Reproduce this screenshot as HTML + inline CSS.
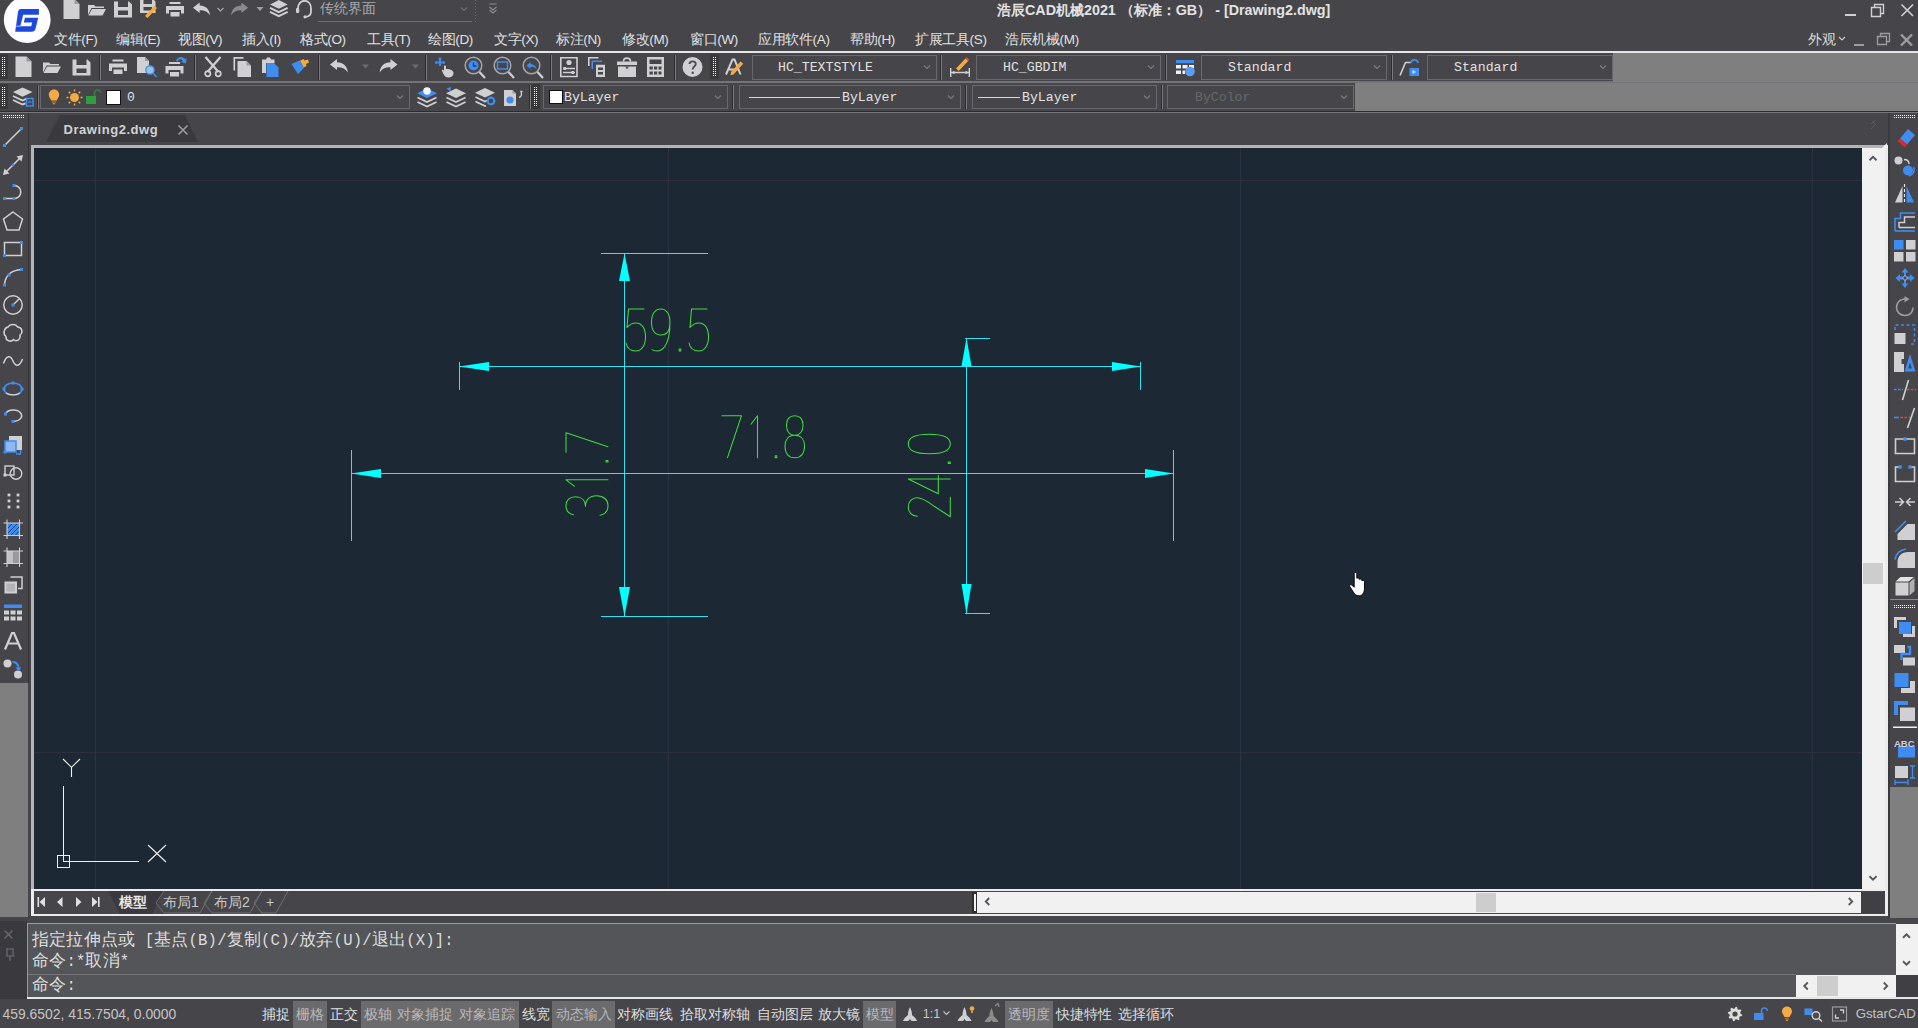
<!DOCTYPE html>
<html lang="zh"><head><meta charset="utf-8"><title>GstarCAD</title>
<style>
html,body{margin:0;padding:0}
body{width:1918px;height:1028px;position:relative;overflow:hidden;background:#46464a;font-family:"Liberation Sans",sans-serif}
body>div,body>svg{position:absolute;display:block}
.t{white-space:nowrap;overflow:visible}
.m{font-family:"Liberation Mono",monospace}
</style></head><body>
<div style="left:0px;top:51px;width:1918px;height:2px;background:#e6e6e6;"></div>
<div style="left:0px;top:81px;width:1918px;height:2px;background:#747478;"></div>
<div style="left:1613px;top:53px;width:305px;height:29px;background:#7f7f80;"></div>
<div style="left:1355px;top:83px;width:563px;height:28px;background:#7f7f80;"></div>
<div style="left:0px;top:111px;width:1918px;height:1px;background:#2c2c30;"></div>
<div style="left:0px;top:112px;width:1918px;height:1px;background:#77777a;"></div>
<div style="left:0px;top:683px;width:28px;height:234px;background:#7f7f80;"></div>
<div style="left:1890px;top:787px;width:28px;height:131px;background:#7f7f80;"></div>
<div style="left:1888px;top:113px;width:2px;height:805px;background:#3a3a3e;"></div>
<div style="left:31px;top:145px;width:1857px;height:771px;background:#ececec;"></div>
<div style="left:31px;top:145px;width:1854px;height:3px;background:#b4b4b6;"></div>
<div style="left:31px;top:145px;width:3px;height:744px;background:#b4b4b6;"></div>
<div style="left:28px;top:113px;width:1px;height:570px;background:#333336;"></div>
<div style="left:34px;top:148px;width:1828px;height:741px;background:#1c2834;"></div>
<div style="left:1862px;top:148px;width:23px;height:741px;background:#f1f1f1;"></div>
<div style="left:34px;top:891px;width:1851px;height:23px;background:#46464a;"></div>
<div style="left:977px;top:892px;width:884px;height:21px;background:#f1f1f1;"></div>
<div style="left:972px;top:892px;width:5px;height:21px;background:#2e2e30;"></div>
<div style="left:974px;top:894px;width:2px;height:17px;background:#f4f4f4;"></div>
<div style="left:1861px;top:892px;width:24px;height:21px;background:#404044;"></div>
<div style="left:1863px;top:563px;width:20px;height:21px;background:#cdcdcd;"></div>
<div style="left:1476px;top:893px;width:20px;height:19px;background:#cdcdcd;"></div>
<div style="left:0px;top:921px;width:27px;height:78px;background:#3a3a3e;"></div>
<div style="left:27px;top:923px;width:1869px;height:75px;background:#545558;box-sizing:border-box;border-top:1px solid #9a9a9e;border-left:1px solid #9a9a9e"></div>
<div style="left:27px;top:997px;width:1891px;height:2px;background:#e6e6e6;"></div>
<div style="left:28px;top:974px;width:1768px;height:1px;background:#77777b;"></div>
<div style="left:1896px;top:924px;width:22px;height:51px;background:#f1f1f1;"></div>
<div style="left:1796px;top:975px;width:100px;height:22px;background:#f1f1f1;"></div>
<div style="left:1896px;top:975px;width:22px;height:22px;background:#404044;"></div>
<div style="left:1817px;top:976px;width:21px;height:20px;background:#cdcdcd;"></div>
<div style="left:293px;top:1001px;width:34px;height:27px;background:#6b6b6e;"></div>
<div style="left:361px;top:1001px;width:158px;height:27px;background:#6b6b6e;"></div>
<div style="left:552px;top:1001px;width:63px;height:27px;background:#6b6b6e;"></div>
<div style="left:863px;top:1001px;width:33px;height:27px;background:#6b6b6e;"></div>
<div style="left:1005px;top:1001px;width:48px;height:27px;background:#6b6b6e;"></div>
<svg style="left:40px;top:113px;" width="170" height="32" viewBox="0 0 170 32"><path d="M6 29 L20 2 L145 2 L158 29 Z" fill="#3a3a3e"/></svg>
<div class="t" style="left:63.5px;top:121px;font-size:13px;line-height:17px;height:17px;color:#d2d2d2;font-weight:bold;letter-spacing:0.55px">Drawing2.dwg</div>
<svg style="left:177px;top:124px;" width="12" height="12" viewBox="0 0 12 12"><path d="M1.5 1.5 L10.5 10.5 M10.5 1.5 L1.5 10.5" stroke="#9a9aa0" stroke-width="1.6" fill="none"/></svg>
<svg style="left:100px;top:891px;" width="190" height="23" viewBox="0 0 190 23"><path d="M8 0 L20 23 L52 23 L64 0 Z" fill="#3a3a3e"/><path d="M64 0 L56 12 L64 22 L100 22 L112 0 M112 0 L104 12 L112 22 L150 22 L162 0 M162 0 L154 12 L162 22 L176 22 L188 0" stroke="#6e6e72" stroke-width="1" fill="none"/></svg>
<div class="t" style="left:119px;top:892px;font-size:14px;line-height:20px;height:20px;color:#e8e8e8;font-weight:bold">模型</div>
<div class="t" style="left:163px;top:892px;font-size:14px;line-height:20px;height:20px;color:#c8c8c8;">布局1</div>
<div class="t" style="left:214px;top:892px;font-size:14px;line-height:20px;height:20px;color:#c8c8c8;">布局2</div>
<div class="t" style="left:266px;top:892px;font-size:14px;line-height:20px;height:20px;color:#c8c8c8;">+</div>
<svg style="left:36px;top:894px;" width="68" height="16" viewBox="0 0 68 16"><g fill="#e0e0e0"><rect x="1.5" y="3" width="1.6" height="10"/><path d="M9 3 L3.5 8 L9 13Z"/><path d="M26.5 3 L21 8 L26.5 13Z"/><path d="M40 3 L45.5 8 L40 13Z"/><path d="M56 3 L61.5 8 L56 13Z"/><rect x="62" y="3" width="1.6" height="10"/></g></svg>
<div class="t" style="left:32px;top:929px;font-size:17px;line-height:22px;height:22px;color:#dedede;letter-spacing:0.18px">指定拉伸点或<span style="font-family:'Liberation Mono',monospace;font-size:15.6px">&nbsp;[</span>基点<span style="font-family:'Liberation Mono',monospace;font-size:15.6px">(B)/</span>复制<span style="font-family:'Liberation Mono',monospace;font-size:15.6px">(C)/</span>放弃<span style="font-family:'Liberation Mono',monospace;font-size:15.6px">(U)/</span>退出<span style="font-family:'Liberation Mono',monospace;font-size:15.6px">(X)]:</span></div>
<div class="t" style="left:32px;top:950px;font-size:17px;line-height:22px;height:22px;color:#dedede;letter-spacing:0.18px">命令<span style="font-family:'Liberation Mono',monospace;font-size:15.6px">:*</span>取消<span style="font-family:'Liberation Mono',monospace;font-size:15.6px">*</span></div>
<div class="t" style="left:32px;top:974px;font-size:17px;line-height:22px;height:22px;color:#dedede;letter-spacing:0.18px">命令<span style="font-family:'Liberation Mono',monospace;font-size:15.6px">:</span></div>
<div class="t" style="left:2.5px;top:1005px;font-size:13.9px;line-height:18px;height:18px;color:#c4c4c4;">459.6502, 415.7504, 0.0000</div>
<div class="t" style="left:262px;top:1005px;font-size:14px;line-height:18px;height:18px;color:#dedede;">捕捉</div>
<div class="t" style="left:296px;top:1005px;font-size:14px;line-height:18px;height:18px;color:#b8b8ba;">栅格</div>
<div class="t" style="left:330px;top:1005px;font-size:14px;line-height:18px;height:18px;color:#dedede;">正交</div>
<div class="t" style="left:364px;top:1005px;font-size:14px;line-height:18px;height:18px;color:#b8b8ba;">极轴</div>
<div class="t" style="left:397px;top:1005px;font-size:14px;line-height:18px;height:18px;color:#b8b8ba;">对象捕捉</div>
<div class="t" style="left:459px;top:1005px;font-size:14px;line-height:18px;height:18px;color:#b8b8ba;">对象追踪</div>
<div class="t" style="left:522px;top:1005px;font-size:14px;line-height:18px;height:18px;color:#dedede;">线宽</div>
<div class="t" style="left:556px;top:1005px;font-size:14px;line-height:18px;height:18px;color:#b8b8ba;">动态输入</div>
<div class="t" style="left:617px;top:1005px;font-size:14px;line-height:18px;height:18px;color:#dedede;">对称画线</div>
<div class="t" style="left:680px;top:1005px;font-size:14px;line-height:18px;height:18px;color:#dedede;">拾取对称轴</div>
<div class="t" style="left:757px;top:1005px;font-size:14px;line-height:18px;height:18px;color:#dedede;">自动图层</div>
<div class="t" style="left:818px;top:1005px;font-size:14px;line-height:18px;height:18px;color:#dedede;">放大镜</div>
<div class="t" style="left:866px;top:1005px;font-size:14px;line-height:18px;height:18px;color:#b8b8ba;">模型</div>
<div class="t" style="left:1008px;top:1005px;font-size:14px;line-height:18px;height:18px;color:#b8b8ba;">透明度</div>
<div class="t" style="left:1056px;top:1005px;font-size:14px;line-height:18px;height:18px;color:#dedede;">快捷特性</div>
<div class="t" style="left:1118px;top:1005px;font-size:14px;line-height:18px;height:18px;color:#dedede;">选择循环</div>
<div class="t" style="left:922.8px;top:1005px;font-size:12.5px;line-height:18px;height:18px;color:#c8c8c8;">1:1</div>
<div class="t" style="left:1855.7px;top:1005px;font-size:13.2px;line-height:18px;height:18px;color:#c4c4c4;">GstarCAD</div>
<div class="t" style="left:997px;top:1px;font-size:14.3px;line-height:18px;height:18px;color:#e2e2e2;font-weight:bold">浩辰CAD机械2021 （标准：GB） - [Drawing2.dwg]</div>
<div class="t" style="left:320px;top:0px;font-size:13.5px;line-height:18px;height:18px;color:#a8a8ac;">传统界面</div>
<div style="left:318px;top:21px;width:154px;height:1px;background:#707078;"></div>
<div class="t" style="left:1808px;top:31px;font-size:13.5px;line-height:18px;height:18px;color:#dcdcdc;">外观</div>
<div class="t" style="left:54px;top:31px;font-size:13.5px;line-height:18px;height:18px;color:#e0e0e0;letter-spacing:-0.35px">文件(F)</div>
<div class="t" style="left:116px;top:31px;font-size:13.5px;line-height:18px;height:18px;color:#e0e0e0;letter-spacing:-0.35px">编辑(E)</div>
<div class="t" style="left:178px;top:31px;font-size:13.5px;line-height:18px;height:18px;color:#e0e0e0;letter-spacing:-0.35px">视图(V)</div>
<div class="t" style="left:242px;top:31px;font-size:13.5px;line-height:18px;height:18px;color:#e0e0e0;letter-spacing:-0.35px">插入(I)</div>
<div class="t" style="left:300px;top:31px;font-size:13.5px;line-height:18px;height:18px;color:#e0e0e0;letter-spacing:-0.35px">格式(O)</div>
<div class="t" style="left:367px;top:31px;font-size:13.5px;line-height:18px;height:18px;color:#e0e0e0;letter-spacing:-0.35px">工具(T)</div>
<div class="t" style="left:428px;top:31px;font-size:13.5px;line-height:18px;height:18px;color:#e0e0e0;letter-spacing:-0.35px">绘图(D)</div>
<div class="t" style="left:494px;top:31px;font-size:13.5px;line-height:18px;height:18px;color:#e0e0e0;letter-spacing:-0.35px">文字(X)</div>
<div class="t" style="left:556px;top:31px;font-size:13.5px;line-height:18px;height:18px;color:#e0e0e0;letter-spacing:-0.35px">标注(N)</div>
<div class="t" style="left:622px;top:31px;font-size:13.5px;line-height:18px;height:18px;color:#e0e0e0;letter-spacing:-0.35px">修改(M)</div>
<div class="t" style="left:690px;top:31px;font-size:13.5px;line-height:18px;height:18px;color:#e0e0e0;letter-spacing:-0.35px">窗口(W)</div>
<div class="t" style="left:758px;top:31px;font-size:13.5px;line-height:18px;height:18px;color:#e0e0e0;letter-spacing:-0.35px">应用软件(A)</div>
<div class="t" style="left:850px;top:31px;font-size:13.5px;line-height:18px;height:18px;color:#e0e0e0;letter-spacing:-0.35px">帮助(H)</div>
<div class="t" style="left:915px;top:31px;font-size:13.5px;line-height:18px;height:18px;color:#e0e0e0;letter-spacing:-0.35px">扩展工具(S)</div>
<div class="t" style="left:1005px;top:31px;font-size:13.5px;line-height:18px;height:18px;color:#e0e0e0;letter-spacing:-0.35px">浩辰机械(M)</div>
<div style="left:752px;top:55px;width:185px;height:25px;box-sizing:border-box;border:1px solid #68686e"></div>
<svg style="left:923px;top:64px;" width="8" height="6" viewBox="0 0 8 6"><path d="M1 1.5 L4 4.5 L7 1.5" stroke="#7a7a80" stroke-width="1.1" fill="none"/></svg>
<div style="left:976px;top:55px;width:185px;height:25px;box-sizing:border-box;border:1px solid #68686e"></div>
<svg style="left:1147px;top:64px;" width="8" height="6" viewBox="0 0 8 6"><path d="M1 1.5 L4 4.5 L7 1.5" stroke="#7a7a80" stroke-width="1.1" fill="none"/></svg>
<div style="left:1201px;top:55px;width:186px;height:25px;box-sizing:border-box;border:1px solid #68686e"></div>
<svg style="left:1373px;top:64px;" width="8" height="6" viewBox="0 0 8 6"><path d="M1 1.5 L4 4.5 L7 1.5" stroke="#7a7a80" stroke-width="1.1" fill="none"/></svg>
<div style="left:1427px;top:55px;width:186px;height:25px;box-sizing:border-box;border:1px solid #68686e"></div>
<svg style="left:1599px;top:64px;" width="8" height="6" viewBox="0 0 8 6"><path d="M1 1.5 L4 4.5 L7 1.5" stroke="#7a7a80" stroke-width="1.1" fill="none"/></svg>
<div style="left:40px;top:85px;width:370px;height:24px;box-sizing:border-box;border:1px solid #68686e"></div>
<svg style="left:396px;top:94px;" width="8" height="6" viewBox="0 0 8 6"><path d="M1 1.5 L4 4.5 L7 1.5" stroke="#7a7a80" stroke-width="1.1" fill="none"/></svg>
<div style="left:543px;top:85px;width:185px;height:24px;box-sizing:border-box;border:1px solid #68686e"></div>
<svg style="left:714px;top:94px;" width="8" height="6" viewBox="0 0 8 6"><path d="M1 1.5 L4 4.5 L7 1.5" stroke="#7a7a80" stroke-width="1.1" fill="none"/></svg>
<div style="left:739px;top:85px;width:222px;height:24px;box-sizing:border-box;border:1px solid #68686e"></div>
<svg style="left:947px;top:94px;" width="8" height="6" viewBox="0 0 8 6"><path d="M1 1.5 L4 4.5 L7 1.5" stroke="#7a7a80" stroke-width="1.1" fill="none"/></svg>
<div style="left:972px;top:85px;width:185px;height:24px;box-sizing:border-box;border:1px solid #68686e"></div>
<svg style="left:1143px;top:94px;" width="8" height="6" viewBox="0 0 8 6"><path d="M1 1.5 L4 4.5 L7 1.5" stroke="#7a7a80" stroke-width="1.1" fill="none"/></svg>
<div style="left:1167px;top:85px;width:187px;height:24px;box-sizing:border-box;border:1px solid #68686e"></div>
<svg style="left:1340px;top:94px;" width="8" height="6" viewBox="0 0 8 6"><path d="M1 1.5 L4 4.5 L7 1.5" stroke="#7a7a80" stroke-width="1.1" fill="none"/></svg>
<div class="t" style="left:778px;top:59px;font-size:13.2px;line-height:17px;height:17px;color:#e2e2e2;font-family:'Liberation Mono',monospace">HC_TEXTSTYLE</div>
<div class="t" style="left:1003px;top:59px;font-size:13.2px;line-height:17px;height:17px;color:#e2e2e2;font-family:'Liberation Mono',monospace">HC_GBDIM</div>
<div class="t" style="left:1228px;top:59px;font-size:13.2px;line-height:17px;height:17px;color:#e2e2e2;font-family:'Liberation Mono',monospace">Standard</div>
<div class="t" style="left:1454px;top:59px;font-size:13.2px;line-height:17px;height:17px;color:#e2e2e2;font-family:'Liberation Mono',monospace">Standard</div>
<div class="t" style="left:564px;top:89px;font-size:13.2px;line-height:17px;height:17px;color:#e2e2e2;font-family:'Liberation Mono',monospace">ByLayer</div>
<div class="t" style="left:842px;top:89px;font-size:13.2px;line-height:17px;height:17px;color:#e2e2e2;font-family:'Liberation Mono',monospace">ByLayer</div>
<div class="t" style="left:1022px;top:89px;font-size:13.2px;line-height:17px;height:17px;color:#e2e2e2;font-family:'Liberation Mono',monospace">ByLayer</div>
<div class="t" style="left:1195px;top:89px;font-size:13.2px;line-height:17px;height:17px;color:#66666c;font-family:'Liberation Mono',monospace">ByColor</div>
<div class="t" style="left:127px;top:89px;font-size:13px;line-height:17px;height:17px;color:#e2e2e2;font-family:'Liberation Mono',monospace">0</div>
<div style="left:749px;top:97px;width:91px;height:1px;background:#d8d8d8;"></div>
<div style="left:978px;top:97px;width:42px;height:1px;background:#d8d8d8;"></div>
<div style="left:106px;top:90px;width:15px;height:15px;background:#ffffff;box-sizing:border-box;border:1px solid #111"></div>
<div style="left:549px;top:90px;width:14px;height:14px;background:#ffffff;box-sizing:border-box;border:1px solid #111"></div>
<svg style="left:0px;top:0px;pointer-events:none" width="1918" height="1028" viewBox="0 0 1918 1028"><circle cx="27.2" cy="19.7" r="23.4" fill="#fdfdff"/><path d="M20.8 9 H38.9 V14.8 H23.2 L20.3 26.2 H31.2 L32.2 22.4 H23.8 L25 17.700 H38.2 L35.6 28.600 Q34.8 31.8 31.6 31.8 H15.2 L18 12 Q18.5 9 20.8 9 Z" fill="#1d48dc"/><path d="M15.800 26.2 H20.5" stroke="#b8c8f8" stroke-width="0.9"/><g transform="translate(63.5 -1)"><path d="M0 0 H11 L16 5 V20 H0 Z" fill="#d0d0d2"/><path d="M11 0 V5 H16 Z" fill="#9c9ca0"/></g><g transform="translate(88 3)"><path d="M0 2 H6 L7.5 3.5 H16 V5 H3.5 L0 12 Z" fill="#d0d0d2"/><path d="M4 6 H18 L14.5 12.5 H0.5 Z" fill="#d0d0d2"/></g><g transform="translate(114 1.5)"><path d="M0 0 H4 V5.5 H14 V0 H15 L18 3 V16 H0 Z M4 9 V13.5 H14 V9 Z" fill="#d0d0d2" fill-rule="evenodd"/></g><g transform="translate(140 -1)"><path d="M0 0 H3.5 V5 H12 V0 H13 L15.5 2.5 V14 H0 Z M3.5 8 V11.5 H12 V8 Z" fill="#d0d0d2" fill-rule="evenodd"/><path d="M5 17 L14.5 6.5 L17 9 L7.5 19 Z" fill="#f4aa45"/></g><g transform="translate(166 2)"><path d="M3.5 0 H14.5 V2 H3.5 Z" fill="#d0d0d2"/><path d="M0 4 H18 V11.5 H15 V8 H3 V11.5 H0 Z" fill="#d0d0d2"/><path d="M4.5 10 H13.5 V14.5 H4.5 Z" fill="#d0d0d2"/></g><g transform="translate(193 2.5) scale(0.95)"><path d="M0 5.5 L7 0 V3.2 C13 3.2 17.5 7 17.8 13.5 C15.5 9.5 12 8 7 8.2 V11 Z" fill="#d0d0d2"/></g><g transform="translate(217.5 8)"><path d="M0 0 L3 3 L6 0" stroke="#a8a8ae" stroke-width="1.2" fill="none"/></g><g transform="translate(231 2.5) scale(0.95)"><g transform="translate(18 0) scale(-1 1)"><path d="M0 5.5 L7 0 V3.2 C13 3.2 17.5 7 17.8 13.5 C15.5 9.5 12 8 7 8.2 V11 Z" fill="#8a8a90"/></g></g><g transform="translate(256.5 7)"><path d="M0 0 H7 L3.5 4 Z" fill="#a0a0a6"/></g><g transform="translate(270 0) scale(0.98)"><path d="M9 0 L18 4.5 L9 9 L0 4.5 Z" fill="#d0d0d2"/><path d="M0 8 L9 12.5 L18 8 M0 12 L9 16.5 L18 12" stroke="#d0d0d2" stroke-width="2" fill="none"/></g><path d="M298 11 V8.5 C298 3.5 301 0.8 304.5 0.8 C308 0.8 311 3.5 311 8.5 V11.5 C311 14.5 309 16.5 306 16.8" stroke="#d0d0d2" stroke-width="1.8" fill="none"/><rect x="296" y="8" width="3.2" height="5" rx="1" fill="#d0d0d2"/><circle cx="305" cy="16.8" r="1.6" fill="#d0d0d2"/><g transform="translate(461 7.5)"><path d="M0 0 L3 3 L6 0" stroke="#6e6e76" stroke-width="1.2" fill="none"/></g><path d="M475.5 0 V22" stroke="#6e6e76" stroke-width="1" stroke-dasharray="1 2"/><g transform="translate(489.5 4)"><path d="M0 0 H7 M0 3 L3.5 6 L7 3 M0 6 L3.5 9 L7 6" stroke="#8e8e96" stroke-width="1.1" fill="none"/></g><rect x="1845" y="14" width="11" height="2" fill="#d0d0d2"/><path d="M1871.5 7.5 H1880.5 V16.5 H1871.5 Z M1874.5 7.5 V4.5 H1883.5 V13.5 H1880.5" stroke="#d0d0d2" stroke-width="1.4" fill="none"/><path d="M1901.5 4.5 L1913 16 M1913 4.5 L1901.5 16" stroke="#d0d0d2" stroke-width="1.6" fill="none"/><g transform="translate(1839 37)"><path d="M0 0 L3 3 L6 0" stroke="#c8c8c8" stroke-width="1.2" fill="none"/></g><rect x="1854" y="44" width="10" height="2" fill="#9c9ca2"/><path d="M1877.500 36.5 H1886.5 V44.5 H1877.5 Z M1880.5 36.500 V33.5 H1889.5 V41.5 H1886.500" stroke="#9c9ca2" stroke-width="1.3" fill="none"/><path d="M1901 34.5 L1912 45.5 M1912 34.5 L1901 45.5" stroke="#9c9ca2" stroke-width="2.4" fill="none"/><rect x="-1" y="54" width="9" height="25" fill="#38383a"/><rect x="2" y="57" width="1" height="1" fill="#fff"/><rect x="4" y="57" width="1" height="1" fill="#fff"/><rect x="2" y="59" width="1" height="1" fill="#fff"/><rect x="4" y="59" width="1" height="1" fill="#fff"/><rect x="2" y="61" width="1" height="1" fill="#fff"/><rect x="4" y="61" width="1" height="1" fill="#fff"/><rect x="2" y="63" width="1" height="1" fill="#fff"/><rect x="4" y="63" width="1" height="1" fill="#fff"/><rect x="2" y="65" width="1" height="1" fill="#fff"/><rect x="4" y="65" width="1" height="1" fill="#fff"/><rect x="2" y="67" width="1" height="1" fill="#fff"/><rect x="4" y="67" width="1" height="1" fill="#fff"/><rect x="2" y="69" width="1" height="1" fill="#fff"/><rect x="4" y="69" width="1" height="1" fill="#fff"/><rect x="2" y="71" width="1" height="1" fill="#fff"/><rect x="4" y="71" width="1" height="1" fill="#fff"/><rect x="2" y="73" width="1" height="1" fill="#fff"/><rect x="4" y="73" width="1" height="1" fill="#fff"/><rect x="2" y="75" width="1" height="1" fill="#fff"/><rect x="4" y="75" width="1" height="1" fill="#fff"/><rect x="710" y="54" width="9" height="25" fill="#38383a"/><rect x="713" y="57" width="1" height="1" fill="#fff"/><rect x="715" y="57" width="1" height="1" fill="#fff"/><rect x="713" y="59" width="1" height="1" fill="#fff"/><rect x="715" y="59" width="1" height="1" fill="#fff"/><rect x="713" y="61" width="1" height="1" fill="#fff"/><rect x="715" y="61" width="1" height="1" fill="#fff"/><rect x="713" y="63" width="1" height="1" fill="#fff"/><rect x="715" y="63" width="1" height="1" fill="#fff"/><rect x="713" y="65" width="1" height="1" fill="#fff"/><rect x="715" y="65" width="1" height="1" fill="#fff"/><rect x="713" y="67" width="1" height="1" fill="#fff"/><rect x="715" y="67" width="1" height="1" fill="#fff"/><rect x="713" y="69" width="1" height="1" fill="#fff"/><rect x="715" y="69" width="1" height="1" fill="#fff"/><rect x="713" y="71" width="1" height="1" fill="#fff"/><rect x="715" y="71" width="1" height="1" fill="#fff"/><rect x="713" y="73" width="1" height="1" fill="#fff"/><rect x="715" y="73" width="1" height="1" fill="#fff"/><rect x="713" y="75" width="1" height="1" fill="#fff"/><rect x="715" y="75" width="1" height="1" fill="#fff"/><rect x="-1" y="84" width="9" height="25" fill="#38383a"/><rect x="2" y="87" width="1" height="1" fill="#fff"/><rect x="4" y="87" width="1" height="1" fill="#fff"/><rect x="2" y="89" width="1" height="1" fill="#fff"/><rect x="4" y="89" width="1" height="1" fill="#fff"/><rect x="2" y="91" width="1" height="1" fill="#fff"/><rect x="4" y="91" width="1" height="1" fill="#fff"/><rect x="2" y="93" width="1" height="1" fill="#fff"/><rect x="4" y="93" width="1" height="1" fill="#fff"/><rect x="2" y="95" width="1" height="1" fill="#fff"/><rect x="4" y="95" width="1" height="1" fill="#fff"/><rect x="2" y="97" width="1" height="1" fill="#fff"/><rect x="4" y="97" width="1" height="1" fill="#fff"/><rect x="2" y="99" width="1" height="1" fill="#fff"/><rect x="4" y="99" width="1" height="1" fill="#fff"/><rect x="2" y="101" width="1" height="1" fill="#fff"/><rect x="4" y="101" width="1" height="1" fill="#fff"/><rect x="2" y="103" width="1" height="1" fill="#fff"/><rect x="4" y="103" width="1" height="1" fill="#fff"/><rect x="2" y="105" width="1" height="1" fill="#fff"/><rect x="4" y="105" width="1" height="1" fill="#fff"/><rect x="531" y="84" width="9" height="25" fill="#38383a"/><rect x="534" y="87" width="1" height="1" fill="#fff"/><rect x="536" y="87" width="1" height="1" fill="#fff"/><rect x="534" y="89" width="1" height="1" fill="#fff"/><rect x="536" y="89" width="1" height="1" fill="#fff"/><rect x="534" y="91" width="1" height="1" fill="#fff"/><rect x="536" y="91" width="1" height="1" fill="#fff"/><rect x="534" y="93" width="1" height="1" fill="#fff"/><rect x="536" y="93" width="1" height="1" fill="#fff"/><rect x="534" y="95" width="1" height="1" fill="#fff"/><rect x="536" y="95" width="1" height="1" fill="#fff"/><rect x="534" y="97" width="1" height="1" fill="#fff"/><rect x="536" y="97" width="1" height="1" fill="#fff"/><rect x="534" y="99" width="1" height="1" fill="#fff"/><rect x="536" y="99" width="1" height="1" fill="#fff"/><rect x="534" y="101" width="1" height="1" fill="#fff"/><rect x="536" y="101" width="1" height="1" fill="#fff"/><rect x="534" y="103" width="1" height="1" fill="#fff"/><rect x="536" y="103" width="1" height="1" fill="#fff"/><rect x="534" y="105" width="1" height="1" fill="#fff"/><rect x="536" y="105" width="1" height="1" fill="#fff"/><rect x="3" y="115" width="1" height="1" fill="#fff"/><rect x="3" y="117" width="1" height="1" fill="#fff"/><rect x="5" y="115" width="1" height="1" fill="#fff"/><rect x="5" y="117" width="1" height="1" fill="#fff"/><rect x="7" y="115" width="1" height="1" fill="#fff"/><rect x="7" y="117" width="1" height="1" fill="#fff"/><rect x="9" y="115" width="1" height="1" fill="#fff"/><rect x="9" y="117" width="1" height="1" fill="#fff"/><rect x="11" y="115" width="1" height="1" fill="#fff"/><rect x="11" y="117" width="1" height="1" fill="#fff"/><rect x="13" y="115" width="1" height="1" fill="#fff"/><rect x="13" y="117" width="1" height="1" fill="#fff"/><rect x="15" y="115" width="1" height="1" fill="#fff"/><rect x="15" y="117" width="1" height="1" fill="#fff"/><rect x="17" y="115" width="1" height="1" fill="#fff"/><rect x="17" y="117" width="1" height="1" fill="#fff"/><rect x="19" y="115" width="1" height="1" fill="#fff"/><rect x="19" y="117" width="1" height="1" fill="#fff"/><rect x="21" y="115" width="1" height="1" fill="#fff"/><rect x="21" y="117" width="1" height="1" fill="#fff"/><rect x="23" y="115" width="1" height="1" fill="#fff"/><rect x="23" y="117" width="1" height="1" fill="#fff"/><rect x="1894" y="115" width="1" height="1" fill="#fff"/><rect x="1894" y="117" width="1" height="1" fill="#fff"/><rect x="1896" y="115" width="1" height="1" fill="#fff"/><rect x="1896" y="117" width="1" height="1" fill="#fff"/><rect x="1898" y="115" width="1" height="1" fill="#fff"/><rect x="1898" y="117" width="1" height="1" fill="#fff"/><rect x="1900" y="115" width="1" height="1" fill="#fff"/><rect x="1900" y="117" width="1" height="1" fill="#fff"/><rect x="1902" y="115" width="1" height="1" fill="#fff"/><rect x="1902" y="117" width="1" height="1" fill="#fff"/><rect x="1904" y="115" width="1" height="1" fill="#fff"/><rect x="1904" y="117" width="1" height="1" fill="#fff"/><rect x="1906" y="115" width="1" height="1" fill="#fff"/><rect x="1906" y="117" width="1" height="1" fill="#fff"/><rect x="1908" y="115" width="1" height="1" fill="#fff"/><rect x="1908" y="117" width="1" height="1" fill="#fff"/><rect x="1910" y="115" width="1" height="1" fill="#fff"/><rect x="1910" y="117" width="1" height="1" fill="#fff"/><rect x="1912" y="115" width="1" height="1" fill="#fff"/><rect x="1912" y="117" width="1" height="1" fill="#fff"/><rect x="1914" y="115" width="1" height="1" fill="#fff"/><rect x="1914" y="117" width="1" height="1" fill="#fff"/><rect x="1894" y="605" width="1" height="1" fill="#fff"/><rect x="1894" y="607" width="1" height="1" fill="#fff"/><rect x="1896" y="605" width="1" height="1" fill="#fff"/><rect x="1896" y="607" width="1" height="1" fill="#fff"/><rect x="1898" y="605" width="1" height="1" fill="#fff"/><rect x="1898" y="607" width="1" height="1" fill="#fff"/><rect x="1900" y="605" width="1" height="1" fill="#fff"/><rect x="1900" y="607" width="1" height="1" fill="#fff"/><rect x="1902" y="605" width="1" height="1" fill="#fff"/><rect x="1902" y="607" width="1" height="1" fill="#fff"/><rect x="1904" y="605" width="1" height="1" fill="#fff"/><rect x="1904" y="607" width="1" height="1" fill="#fff"/><rect x="1906" y="605" width="1" height="1" fill="#fff"/><rect x="1906" y="607" width="1" height="1" fill="#fff"/><rect x="1908" y="605" width="1" height="1" fill="#fff"/><rect x="1908" y="607" width="1" height="1" fill="#fff"/><rect x="1910" y="605" width="1" height="1" fill="#fff"/><rect x="1910" y="607" width="1" height="1" fill="#fff"/><rect x="1912" y="605" width="1" height="1" fill="#fff"/><rect x="1912" y="607" width="1" height="1" fill="#fff"/><rect x="1914" y="605" width="1" height="1" fill="#fff"/><rect x="1914" y="607" width="1" height="1" fill="#fff"/><rect x="99" y="55" width="1" height="25" fill="#2e2e32"/><rect x="100" y="55" width="1" height="25" fill="#7a7a80"/><rect x="194" y="55" width="1" height="25" fill="#2e2e32"/><rect x="195" y="55" width="1" height="25" fill="#7a7a80"/><rect x="318" y="55" width="1" height="25" fill="#2e2e32"/><rect x="319" y="55" width="1" height="25" fill="#7a7a80"/><rect x="425" y="55" width="1" height="25" fill="#2e2e32"/><rect x="426" y="55" width="1" height="25" fill="#7a7a80"/><rect x="550" y="55" width="1" height="25" fill="#2e2e32"/><rect x="551" y="55" width="1" height="25" fill="#7a7a80"/><rect x="674" y="55" width="1" height="25" fill="#2e2e32"/><rect x="675" y="55" width="1" height="25" fill="#7a7a80"/><rect x="940" y="55" width="1" height="25" fill="#2e2e32"/><rect x="941" y="55" width="1" height="25" fill="#7a7a80"/><rect x="1165" y="55" width="1" height="25" fill="#2e2e32"/><rect x="1166" y="55" width="1" height="25" fill="#7a7a80"/><rect x="1391" y="55" width="1" height="25" fill="#2e2e32"/><rect x="1392" y="55" width="1" height="25" fill="#7a7a80"/><rect x="37" y="85" width="1" height="24" fill="#2e2e32"/><rect x="38" y="85" width="1" height="24" fill="#7a7a80"/><rect x="529" y="85" width="1" height="24" fill="#2e2e32"/><rect x="530" y="85" width="1" height="24" fill="#7a7a80"/><rect x="732" y="85" width="1" height="24" fill="#2e2e32"/><rect x="733" y="85" width="1" height="24" fill="#7a7a80"/><rect x="965" y="85" width="1" height="24" fill="#2e2e32"/><rect x="966" y="85" width="1" height="24" fill="#7a7a80"/><rect x="1161" y="85" width="1" height="24" fill="#2e2e32"/><rect x="1162" y="85" width="1" height="24" fill="#7a7a80"/><g transform="translate(15.5 56.5)"><path d="M0 0 H11 L16 5 V20.5 H0 Z" fill="#d0d0d2"/><path d="M11 0 V5 H16 Z" fill="#9c9ca0"/></g><g transform="translate(43 60.5)"><path d="M0 2 H6 L7.5 3.5 H16 V5 H3.5 L0 12 Z" fill="#d0d0d2"/><path d="M4 6 H18 L14.5 12.5 H0.5 Z" fill="#d0d0d2"/></g><g transform="translate(72.5 59.5)"><path d="M0 0 H4 V5.5 H14 V0 H15 L18 3 V16 H0 Z M4 9 V13.5 H14 V9 Z" fill="#d0d0d2" fill-rule="evenodd"/></g><g transform="translate(109 59.5)"><path d="M3.5 0 H14.5 V2 H3.5 Z" fill="#d0d0d2"/><path d="M0 4 H18 V11.5 H15 V8 H3 V11.5 H0 Z" fill="#d0d0d2"/><path d="M4.5 10 H13.5 V14.5 H4.5 Z" fill="#d0d0d2"/></g><g transform="translate(137 57)"><path d="M0 0 H8 L12 4 V16 H0 Z" fill="#d0d0d2"/><path d="M8 0 V4 H12 Z" fill="#9c9ca0"/><circle cx="13" cy="13" r="4.2" fill="#9dbfee" stroke="#3f8df0" stroke-width="1.3"/><path d="M16 16 L19.500 20" stroke="#3f8df0" stroke-width="1.6"/></g><g transform="translate(165.5 62)"><path d="M3.5 0 H14.5 V2 H3.5 Z" fill="#d0d0d2"/><path d="M0 4 H18 V11.5 H15 V8 H3 V11.5 H0 Z" fill="#d0d0d2"/><path d="M4.5 10 H13.5 V14.5 H4.5 Z" fill="#d0d0d2"/><path d="M10.5 -1 C12 -5.500 17 -6.500 19.500 -3 L21 -4 L20.5 1.5 L15.5 0 L17.2 -1.2 C15.5 -3.500 13 -3 12.2 -0.5 Z" fill="#3f8df0"/></g><g transform="translate(204 57)"><path d="M1.500 0 L14.500 15 M16.500 0 L3.500 15" stroke="#d0d0d2" stroke-width="2.2" fill="none"/><circle cx="3.8" cy="16.800" r="2.6" fill="none" stroke="#d0d0d2" stroke-width="1.7"/><circle cx="14.200" cy="16.8" r="2.6" fill="none" stroke="#d0d0d2" stroke-width="1.7"/></g><g transform="translate(233.5 57)"><path d="M0.8 13.5 V0.8 H10" stroke="#d0d0d2" stroke-width="1.7" fill="none"/><g transform="translate(4 4)"><path d="M0 0 H9.0 L13.5 4.5 V16 H0 Z" fill="#d0d0d2"/><path d="M9.0 0 V4.5 H13.5 Z" fill="#9c9ca0"/></g></g><g transform="translate(262 57)"><path d="M0 2.500 H4 L5 0.5 H8 L9 2.500 H12.500 V6 H0 Z M0 6 H4 V16 H0 Z" fill="#d0d0d2"/><path d="M4.500 6 H12 L16.5 10.5 V20 H4.500 Z" fill="#3f8df0"/></g><g transform="translate(291.5 59)"><path d="M0 5 L8 1.500 L12.500 9 L6.500 15 Z" fill="#3f8df0"/><path d="M8.500 1.800 L12 0 L13 1.5 L16.500 0.5 L17.500 3.500 L14.500 5 L15 7 L12.300 8.600 Z" fill="#f4aa45"/></g><g transform="translate(330 59)"><path d="M0 5.5 L7 0 V3.2 C13 3.2 17.5 7 17.8 13.5 C15.5 9.5 12 8 7 8.2 V11 Z" fill="#d0d0d2"/></g><g transform="translate(362 64.5)"><path d="M0 0 H7 L3.5 4 Z" fill="#6c6c72"/></g><g transform="translate(379.5 59)"><g transform="translate(18 0) scale(-1 1)"><path d="M0 5.5 L7 0 V3.2 C13 3.2 17.5 7 17.8 13.5 C15.5 9.5 12 8 7 8.2 V11 Z" fill="#d0d0d2"/></g></g><g transform="translate(412 64.5)"><path d="M0 0 H7 L3.5 4 Z" fill="#6c6c72"/></g><g transform="translate(435 57)"><path d="M5 0 L7 2 H6 V4.500 H8.500 V3.500 L10.500 5.500 L8.500 7.500 V6.500 H6 V9 H4 V6.500 H1.500 V7.500 L-0.500 5.500 L1.500 3.500 V4.500 H4 V2 H3 Z" fill="#3f8df0"/><path d="M9 9.500 C9 8 11 8 11 9.500 V12 C13 11.500 18.500 12.500 18.500 16 C18.500 19 16 20.500 13.500 20.500 C10.500 20.500 9.500 19 8.500 17 L7 14 C6.500 12.800 8 12.200 9 13.500 Z" fill="#d0d0d2"/></g><circle cx="473.5" cy="65.5" r="8.300" fill="none" stroke="#a4a4aa" stroke-width="1.5"/><path d="M479.5 72.0 L485.0 78.0" stroke="#d0d0d2" stroke-width="2.200"/><circle cx="473.500" cy="65.500" r="5" fill="#3f8df0"/><path d="M473.500 62.500 V66 H476.500" stroke="#1c3c80" stroke-width="1.3" fill="none"/><circle cx="502.5" cy="65.5" r="8.300" fill="none" stroke="#a4a4aa" stroke-width="1.5"/><path d="M508.5 72.0 L514.0 78.0" stroke="#d0d0d2" stroke-width="2.200"/><rect x="497.5" y="62" width="10" height="7" fill="none" stroke="#3f8df0" stroke-width="1.500"/><circle cx="531.5" cy="65.5" r="8.300" fill="none" stroke="#a4a4aa" stroke-width="1.5"/><path d="M537.5 72.0 L543.0 78.0" stroke="#d0d0d2" stroke-width="2.200"/><path d="M526.500 65.500 L530.500 62 V64.300 C533.500 64.300 536 65.800 536.300 69 C535 67.200 533.500 66.700 530.500 66.800 V69 Z" fill="#3f8df0"/><g transform="translate(560 57)"><path d="M0.800 0.800 H17 V19.500 H0.800 Z" fill="none" stroke="#d0d0d2" stroke-width="1.600"/><circle cx="9" cy="5.500" r="2.600" fill="#d0d0d2"/><path d="M3 11.500 H15 M3 15.500 H15" stroke="#d0d0d2" stroke-width="1.600"/><rect x="3.500" y="10" width="2.5" height="3" fill="#d0d0d2"/><rect x="11.500" y="14" width="2.500" height="3" fill="#d0d0d2"/></g><g transform="translate(588 57)"><path d="M0.800 9 V0.800 H10.500" stroke="#d0d0d2" stroke-width="1.600" fill="none"/><path d="M4.300 12 V4.300 H14" stroke="#3f8df0" stroke-width="1.600" fill="none"/><path d="M8 7.800 H17 V20 H8 Z M10 10.500 V13 H15 V10.500 Z M10 15 V17.500 H15 V15 Z" fill="#d0d0d2" fill-rule="evenodd"/></g><g transform="translate(617 58)"><path d="M6.500 3.500 C6.500 -1 13.500 -1 13.500 3.500" stroke="#d0d0d2" stroke-width="1.700" fill="none"/><path d="M0 3.500 H20 V7 H0 Z" fill="#d0d0d2"/><path d="M1 8.500 H19 V19 H1 Z" fill="#d0d0d2"/><path d="M8 8.500 H12 L10 11.500 Z" fill="#55555a"/></g><g transform="translate(647 57)"><path d="M0 0 H17 V20 H0 Z M2.500 2.500 V7 H14.500 V2.500 Z M2.500 9.500 V12.500 H5.800 V9.500 Z M7 9.500 V12.500 H10.200 V9.500 Z M11.500 9.500 V12.500 H14.500 V9.500 Z M2.500 14.500 V17.500 H5.800 V14.500 Z M7 14.500 V17.500 H10.200 V14.500 Z M11.500 14.500 V17.500 H14.500 V14.500 Z" fill="#d0d0d2" fill-rule="evenodd"/></g><circle cx="692.500" cy="67" r="10" fill="#d0d0d2"/><path d="M689.500 64 C689.500 60.500 695.800 60.500 695.800 64 C695.800 66.200 692.700 66.500 692.700 69.500" stroke="#4a4a50" stroke-width="1.800" fill="none"/><circle cx="692.700" cy="72.800" r="1.200" fill="#4a4a50"/><g transform="translate(725 58)"><path d="M1 16.500 L7.500 1.500 H9.500 L15.500 16.500 M4 11.500 H12.500" stroke="#d0d0d2" stroke-width="2" fill="none"/><path d="M6 14 L15.500 3.500 L18.200 5.800 L8.500 16.500 L5.500 17.200 Z" fill="#f4aa45"/></g><g transform="translate(950 57)"><path d="M0.700 11 V20 M19.300 11 V20 M1 15.500 H19" stroke="#d0d0d2" stroke-width="1.400" fill="none"/><path d="M1 15.500 L4.500 13.800 V17.200 Z M19 15.500 L15.500 13.800 V17.200 Z" fill="#d0d0d2"/><path d="M6 11.500 L15.500 1.500 L18.200 4 L8.700 14 Z" fill="#f4aa45"/><path d="M15.500 1.500 L16.800 0.200 L19.500 2.700 L18.200 4 Z" fill="#e05030"/></g><g transform="translate(1176 60)"><rect x="0" y="0" width="18" height="3.200" fill="#3f8df0"/><path d="M0 5 H5 V8.500 H0 Z M6.500 5 H11.500 V8.500 H6.500 Z M13 5 H18 V8.500 H13 Z M0 10.500 H5 V14 H0 Z M6.500 10.500 H9 V14 H6.500 Z" fill="#f0f0f0"/><circle cx="14" cy="11.500" r="4.800" fill="#5c9cf4"/></g><g transform="translate(1399 58)"><path d="M1 17.500 L6.500 4.500 H12" stroke="#d0d0d2" stroke-width="1.600" fill="none"/><path d="M12 5 C12 1 18.500 0.500 19 5" stroke="#3f8df0" stroke-width="1.700" fill="none"/><rect x="10.500" y="10" width="9.500" height="8" fill="#3f8df0"/><path d="M13.500 12 L17 14 L13.500 16 Z" fill="#cfe0fa"/></g><g transform="translate(13 87.5)"><path d="M9.500 0 L19.500 4.500 L9.500 9.200 L0 4.500 Z" fill="#d0d0d2"/><path d="M0 8.500 L9.500 13 L14 11 M0 12.500 L9.500 17 L12.500 15.800" stroke="#d0d0d2" stroke-width="1.900" fill="none"/><rect x="13.500" y="11" width="6.500" height="7.500" fill="none" stroke="#3f8df0" stroke-width="1.400"/><path d="M15 14.500 H18.500" stroke="#3f8df0" stroke-width="1.200"/></g><path d="M54 89.500 C50.800 89.500 48.800 92 48.800 94.800 C48.800 97.200 50.500 98.500 51.200 100.500 H56.800 C57.500 98.500 59.200 97.200 59.200 94.800 C59.200 92 57.200 89.500 54 89.500 Z" fill="#f4aa45"/><rect x="51.800" y="101.300" width="4.400" height="1.500" fill="#b07020"/><path d="M52.500 103.300 H55.500 L54 104.800 Z" fill="#f4aa45"/><circle cx="74.500" cy="97.500" r="4.500" fill="#f4aa45"/><path d="M74.500 89.500 V91.500 M74.500 103.500 V105.500 M66.500 97.500 H68.500 M80.500 97.500 H82.500 M68.800 91.800 L70.300 93.300 M78.700 101.700 L80.200 103.200 M80.200 91.800 L78.700 93.300 M68.800 103.200 L70.300 101.700" stroke="#f4aa45" stroke-width="1.400"/><rect x="86" y="96" width="10" height="8" fill="#2f9e3c"/><path d="M94.500 96 V93 C94.500 90 98 88.500 99.800 91 L101 92.800" stroke="#3c7c44" stroke-width="1.500" fill="none"/><g transform="translate(417 88.5)"><path d="M10 0 L20 4.800 L10 9.600 L0 4.800 Z" fill="#3f8df0"/><path d="M0.500 9 L10 13.500 L19.500 9 M0.500 13.500 L10 18 L19.500 13.500" stroke="#d0d0d2" stroke-width="1.900" fill="none"/></g><circle cx="427" cy="91" r="3.800" fill="#f2f4fa"/><g transform="translate(446 88.5)"><path d="M10 0 L20 4.800 L10 9.600 L0 4.800 Z" fill="#d0d0d2"/><path d="M0.500 9 L10 13.500 L19.500 9 M0.500 13.500 L10 18 L19.500 13.500" stroke="#d0d0d2" stroke-width="1.900" fill="none"/></g><path d="M446.500 88.500 L451 87 L450.500 91.500 Z" fill="#3f8df0"/><g transform="translate(475 88)"><path d="M10 0 L20 4.800 L10 9.600 L0 4.800 Z" fill="#d0d0d2"/><path d="M0.500 9 L10 13.500 L12 12.500 M0.500 13.500 L10 18 L11 17.500" stroke="#d0d0d2" stroke-width="1.900" fill="none"/></g><circle cx="491" cy="101" r="3.300" fill="none" stroke="#3f8df0" stroke-width="2.200"/><g transform="translate(504 90)"><path d="M0 0 H8.5 L12 3.5 V16 H0 Z" fill="#d0d0d2"/><path d="M8.5 0 V3.5 H12 Z" fill="#9c9ca0"/><circle cx="6" cy="10" r="3.600" fill="#3f8df0"/><path d="M15 7.500 C17.500 7 18 4 17 1.500 L18.500 1.500" stroke="#d0d0d2" stroke-width="1.300" fill="none"/></g><g transform="translate(3 127)"><path d="M1.500 18.500 L18.500 1.500" stroke="#d0d0d2" stroke-width="1.6" fill="none" /><rect x="0.0" y="17.0" width="3" height="3" fill="#3f8df0"/><rect x="17.0" y="0.0" width="3" height="3" fill="#3f8df0"/></g><g transform="translate(3 155)"><path d="M1 19 L19 1" stroke="#d0d0d2" stroke-width="1.6" fill="none" /><path d="M0 20 L1.5 13.500 L6.500 18.500 Z M20 0 L18.500 6.500 L13.500 1.500 Z" fill="#d0d0d2"/><rect x="8.7" y="8.7" width="2.6" height="2.6" fill="#3f8df0"/></g><g transform="translate(3 183)"><path d="M1.500 15.500 H11 C20 15.500 20 2.500 11 2.500" stroke="#d0d0d2" stroke-width="1.5" fill="none" /><rect x="0.0" y="14.0" width="3" height="3" fill="#3f8df0"/><rect x="9.5" y="14.0" width="3" height="3" fill="#3f8df0"/><rect x="9.5" y="1.0" width="3" height="3" fill="#3f8df0"/></g><g transform="translate(3 211)"><path d="M10 1 L19.500 8 L16 19 H4 L0.500 8 Z" stroke="#d0d0d2" stroke-width="1.5" fill="none" /></g><g transform="translate(3 239)"><path d="M1.500 3.500 H18.500 V16.500 H1.500 Z" stroke="#d0d0d2" stroke-width="1.5" fill="none" /><rect x="17.0" y="2.0" width="3" height="3" fill="#3f8df0"/><rect x="0.0" y="15.0" width="3" height="3" fill="#3f8df0"/></g><g transform="translate(3 267)"><path d="M1.500 18 C2 9 8 3 18.500 2.500" stroke="#d0d0d2" stroke-width="1.5" fill="none" /><rect x="0.0" y="16.5" width="3" height="3" fill="#3f8df0"/><rect x="4.5" y="6.5" width="3" height="3" fill="#3f8df0"/><rect x="17.0" y="1.0" width="3" height="3" fill="#3f8df0"/></g><g transform="translate(3 295)"><circle cx="10" cy="10" r="9.200" fill="none" stroke="#d0d0d2" stroke-width="1.500"/><path d="M10 10 L16 4" stroke="#d0d0d2" stroke-width="1.5" fill="none" /><rect x="8.5" y="8.5" width="3" height="3" fill="#3f8df0"/></g><g transform="translate(3 323)"><path d="M5 4 C7 0.500 13 0.500 14.500 4 C19 4 20.500 9.500 17 12 C18 17 13 19 10.500 16.500 C8 19.500 2.500 18 3 13.500 C-0.500 11 1 5 5 4 Z" stroke="#d0d0d2" stroke-width="1.5" fill="none" /></g><g transform="translate(3 351)"><path d="M0.500 12.500 C3.500 4 7.500 4 10 10 C12.500 16 16.500 16 19.500 8" stroke="#d0d0d2" stroke-width="1.5" fill="none" /></g><g transform="translate(3 379)"><ellipse cx="10" cy="10" rx="9" ry="6" fill="none" stroke="#3f8df0" stroke-width="1.600"/><path d="M3 14 C6 16.500 14 16.500 17 14" stroke="#d0d0d2" stroke-width="1.4" fill="none" /><rect x="-0.5" y="8.5" width="3" height="3" fill="#3f8df0"/><rect x="17.5" y="8.5" width="3" height="3" fill="#3f8df0"/><rect x="8.5" y="2.5" width="3" height="3" fill="#3f8df0"/></g><g transform="translate(3 407)"><path d="M3 6 C6 2 15 2 18 6.500 C20 10 17 14 11 14.500" stroke="#d0d0d2" stroke-width="1.5" fill="none" /><rect x="1.0" y="5.5" width="3" height="3" fill="#3f8df0"/><rect x="8.5" y="13.0" width="3" height="3" fill="#3f8df0"/></g><g transform="translate(3 435)"><rect x="6" y="1" width="13" height="14" fill="#d0d0d2"/><rect x="2" y="6" width="11" height="11" fill="#8fb8f0" stroke="#3f8df0" stroke-width="1.500"/><path d="M13 19 H17.500 V15" stroke="#3f8df0" stroke-width="1.4" fill="none" /><rect x="0.5" y="15.5" width="3" height="3" fill="#3f8df0"/></g><g transform="translate(3 463)"><rect x="2" y="3" width="9" height="9" fill="none" stroke="#d0d0d2" stroke-width="1.400"/><circle cx="13" cy="10.500" r="5.800" fill="none" stroke="#d0d0d2" stroke-width="1.400"/><rect x="0.5" y="10.5" width="3" height="3" fill="#d0d0d2"/></g><g transform="translate(3 491)"><rect x="4.6" y="2.6" width="2.8" height="2.8" fill="#d0d0d2"/><rect x="4.6" y="8.6" width="2.8" height="2.8" fill="#d0d0d2"/><rect x="4.6" y="14.6" width="2.8" height="2.8" fill="#d0d0d2"/><rect x="13.6" y="2.6" width="2.8" height="2.8" fill="#d0d0d2"/><rect x="13.6" y="8.6" width="2.8" height="2.8" fill="#d0d0d2"/><rect x="13.6" y="14.6" width="2.8" height="2.8" fill="#d0d0d2"/></g><g transform="translate(3 519)"><rect x="4" y="4" width="12.500" height="12.500" fill="#3f8df0"/><path d="M4 0.500 V20 M16.500 0.500 V20 M0.500 4 H20 M0.500 16.500 H20" stroke="#d0d0d2" stroke-width="1.1" fill="none" /><path d="M5 9 L9 5 M5 14 L14 5 M8 16 L16 8 M12.500 16 L16 12.500" stroke="#1c3f88" stroke-width="1" fill="none" /></g><g transform="translate(3 547)"><rect x="4" y="4" width="12.500" height="12.500" fill="#9a9a9e"/><rect x="4" y="4" width="6" height="12.500" fill="#c2c2c6"/><path d="M4 0.500 V20 M16.500 0.500 V20 M0.500 4 H20 M0.500 16.500 H20" stroke="#d0d0d2" stroke-width="1.1" fill="none" /></g><g transform="translate(3 575)"><path d="M7.500 2 H19 V13.500 H15" stroke="#d0d0d2" stroke-width="1.500" fill="none"/><rect x="1.500" y="6.500" width="12.500" height="12" fill="#d0d0d2"/><rect x="3.500" y="8.500" width="8.500" height="8" fill="#b4b4b8"/></g><g transform="translate(3 603)"><rect x="1" y="1.500" width="18" height="3.500" fill="#3f8df0"/><rect x="1" y="7.5" width="5" height="4" fill="#d0d0d2"/><rect x="1" y="13.5" width="5" height="4" fill="#d0d0d2"/><rect x="7.5" y="7.5" width="5" height="4" fill="#d0d0d2"/><rect x="7.5" y="13.5" width="5" height="4" fill="#d0d0d2"/><rect x="14" y="7.5" width="5" height="4" fill="#d0d0d2"/><rect x="14" y="13.5" width="5" height="4" fill="#d0d0d2"/></g><g transform="translate(3 631)"><path d="M2 18.500 L9 2 H11 L18 18.500 M5 12.500 H15" stroke="#d0d0d2" stroke-width="2.2" fill="none" /></g><g transform="translate(3 659)"><circle cx="4.500" cy="4.500" r="4" fill="#d0d0d2"/><circle cx="15" cy="15.500" r="4" fill="#d0d0d2"/><path d="M9.500 3 C13.500 3 15.500 5.500 15.500 9.500" stroke="#3f8df0" stroke-width="2" fill="none" /><path d="M12.500 8.500 H18.500 L15.500 12 Z" fill="#3f8df0"/></g><g transform="translate(1894 128)"><path d="M6 10.500 L14 1 L21 7 L13 16.500 Z" fill="#3f8df0"/><path d="M6 10.500 L13 16.500 L10.500 19 L3.500 13 Z" fill="#e02828"/></g><g transform="translate(1894 156)"><circle cx="4.500" cy="4.500" r="4" fill="#d0d0d2"/><circle cx="14" cy="14.500" r="5" fill="#3f8df0"/><path d="M10 3.500 C14 3.500 15 5 15 8" stroke="#d0d0d2" stroke-width="1.4" fill="none" /><path d="M19.500 11 C21.500 15 19 19 15 20" stroke="#3f8df0" stroke-width="1.4" fill="none" /></g><g transform="translate(1894 184)"><path d="M8.500 2 V18.500 H1 Z" fill="#d0d0d2"/><path d="M12.500 2 V18.500 H20 Z" fill="#3f8df0"/><path d="M10.500 0 V20" stroke="#e8e8e8" stroke-width="1.1" fill="none" stroke-dasharray="3 2"/></g><g transform="translate(1894 212)"><path d="M1 19 V6.500 H6.500 V1 H21" stroke="#3f8df0" stroke-width="1.6" fill="none" /><path d="M1 19 H21" stroke="#3f8df0" stroke-width="1.6" fill="none" /><path d="M5 15.500 V10.500 H10.500 V5 H21 M5 15.500 H21" stroke="#d0d0d2" stroke-width="1.5" fill="none" /></g><g transform="translate(1894 240)"><rect x="0" y="0" width="9.500" height="9.500" fill="#3f8df0"/><rect x="12" y="0" width="9.500" height="9.500" fill="#d0d0d2"/><rect x="0" y="12" width="9.500" height="9.500" fill="#d0d0d2"/><rect x="12" y="12" width="9.500" height="9.500" fill="#d0d0d2"/></g><g transform="translate(1894 268)"><path d="M11 0 L14.500 4.500 H12 V8.500 H16 V6 L20.500 10 L16 14 V11.500 H12 V15.500 H14.500 L11 20 L7.500 15.500 H10 V11.500 H6 V14 L1.500 10 L6 6 V8.500 H10 V4.500 H7.500 Z" fill="#3f8df0"/><path d="M11 7.500 L13.500 10 L11 12.500 L8.500 10 Z" fill="#46464a" stroke="#d0d0d2" stroke-width="0.800"/></g><g transform="translate(1894 296)"><path d="M11.500 3 C5.500 3 2.500 7 2.500 11.500 C2.500 16 6 19.500 11 19.500 C16 19.500 19 16 19 11.500" stroke="#9c9ca2" stroke-width="1.6" fill="none" /><path d="M10.500 0 L15.500 3 L10.500 6.500 Z" fill="#9c9ca2"/></g><g transform="translate(1894 324)"><rect x="0.500" y="9" width="11" height="11" fill="#d0d0d2"/><path d="M1 6 V1 H20.500 V20 H15" stroke="#3f8df0" stroke-width="1.5" fill="none" stroke-dasharray="3 2.500"/></g><g transform="translate(1894 352)"><path d="M0 0 H10 V7 H7.500 V12 H10 V20 H0 Z" fill="#d0d0d2"/><path d="M16 2 L21.500 19.500 H10.500 Z" fill="#3f8df0"/><path d="M16 10.500 L17.800 16.500 H14.200 Z" fill="#46464a"/></g><g transform="translate(1894 380)"><path d="M14.500 0 L8.500 20" stroke="#d0d0d2" stroke-width="1.6" fill="none" /><path d="M0 9.500 H9" stroke="#3f8df0" stroke-width="1.6" fill="none" stroke-dasharray="2.500 1.500"/><path d="M13 9.500 H22" stroke="#e04848" stroke-width="1.6" fill="none" stroke-dasharray="2.500 1.500"/></g><g transform="translate(1894 408)"><path d="M20.500 0 L13.500 20" stroke="#d0d0d2" stroke-width="1.6" fill="none" /><path d="M0 9.500 H5" stroke="#3f8df0" stroke-width="1.6" fill="none" /><path d="M6.500 9.500 H16" stroke="#e04848" stroke-width="1.6" fill="none" stroke-dasharray="2.500 1.500"/></g><g transform="translate(1894 436)"><path d="M1.500 3 H20.500 V17.500 H1.500 Z" stroke="#d0d0d2" stroke-width="1.6" fill="none" /><rect x="9.3" y="1.3" width="3.4" height="3.4" fill="#3f8df0"/></g><g transform="translate(1894 464)"><path d="M6 3 H1.500 V17.500 H20.500 V3 H16" stroke="#d0d0d2" stroke-width="1.6" fill="none" /><rect x="4.3" y="1.3" width="3.4" height="3.4" fill="#3f8df0"/><rect x="14.3" y="1.3" width="3.4" height="3.4" fill="#3f8df0"/></g><g transform="translate(1894 492)"><path d="M1 10 H9 M5.500 6 L9.500 10 L5.500 14 M21 10 H13 M16.500 6 L12.500 10 L16.500 14" stroke="#d0d0d2" stroke-width="1.5" fill="none" /></g><g transform="translate(1894 520)"><path d="M3.500 20 V14 L13.500 4 H21 V20 Z" fill="#d0d0d2"/><path d="M1 12 L12 1" stroke="#3f8df0" stroke-width="1.7" fill="none" /></g><g transform="translate(1894 548)"><path d="M3.500 20 V14 C3.500 8 8 4 14 4 H21 V20 Z" fill="#d0d0d2"/><path d="M1 11.500 C2 5.500 6 2 12 1" stroke="#3f8df0" stroke-width="1.7" fill="none" /></g><g transform="translate(1894 576)"><rect x="1.500" y="6.500" width="13" height="13" fill="#d0d0d2"/><path d="M1.500 5.500 L6.500 1 H20 L14.500 5.500 Z" fill="#e4e4e6"/><path d="M15.500 6.500 L20.500 2 V15 L15.500 19.500 Z" fill="#b0b0b4"/></g><rect x="1890" y="599" width="28" height="1" fill="#8a8a90"/><g transform="translate(1894 617)"><path d="M0 0 H12 V3 H3 V11 H0 Z" fill="#d0d0d2"/><path d="M21 9 V20 H9 V17 H18 V9 Z" fill="#d0d0d2"/><rect x="5" y="5" width="12" height="12" fill="#3f8df0"/></g><g transform="translate(1894 645)"><rect x="0" y="0" width="11" height="8" fill="#d0d0d2"/><rect x="9" y="12.500" width="12" height="8" fill="#d0d0d2"/><path d="M13.500 2 H16 V9 H7.500 V15" stroke="#3f8df0" stroke-width="2.4" fill="none" /></g><g transform="translate(1894 673)"><path d="M21 8 V20 H7 V15 H16 V8 Z" fill="#d0d0d2"/><rect x="0.500" y="0" width="14" height="14" fill="#3f8df0"/></g><g transform="translate(1894 701)"><path d="M0 0 H14 V4 H4 V14 H0 Z" fill="#3f8df0"/><rect x="6" y="6.500" width="15" height="13.500" fill="#d0d0d2"/></g><rect x="1893" y="726.500" width="24" height="1.500" fill="#f0f0f0"/><g transform="translate(1894 738)"><rect x="4" y="8" width="17" height="11.500" fill="#3f8df0"/><text x="0" y="9" font-family="Liberation Sans" font-weight="bold" font-size="9.500" fill="#d0d0d2">ABC</text></g><g transform="translate(1894 765)"><rect x="1" y="1" width="13" height="12" fill="#d0d0d2"/><path d="M1 14.500 V20 M14 14.500 V20 M1 17.500 H14 M18.500 1 V13 M16 1 H21 M16 13 H21" stroke="#3f8df0" stroke-width="1.3" fill="none" /></g><path d="M1869.5 160.25 L1873 156.75 L1876.5 160.25" stroke="#55555a" stroke-width="1.8" fill="none"/><path d="M1869.5 876.25 L1873 879.75 L1876.5 876.25" stroke="#55555a" stroke-width="1.8" fill="none"/><path d="M989.25 898.0 L985.75 901.5 L989.25 905.0" stroke="#55555a" stroke-width="1.8" fill="none"/><path d="M1848.75 898.0 L1852.25 901.5 L1848.75 905.0" stroke="#55555a" stroke-width="1.8" fill="none"/><path d="M1903.0 937.75 L1906.5 934.25 L1910.0 937.75" stroke="#55555a" stroke-width="1.8" fill="none"/><path d="M1903.0 961.25 L1906.5 964.75 L1910.0 961.25" stroke="#55555a" stroke-width="1.8" fill="none"/><path d="M1807.75 982.5 L1804.25 986 L1807.75 989.5" stroke="#55555a" stroke-width="1.8" fill="none"/><path d="M1883.75 982.5 L1887.25 986 L1883.75 989.5" stroke="#55555a" stroke-width="1.8" fill="none"/><path d="M4.500 930.500 L12.500 938.500 M12.500 930.500 L4.500 938.500" stroke="#6a6a72" stroke-width="1.300" fill="none"/><path d="M7 948 V956 M13 948 V956 M5.500 956 H14.500 M10 956 V961 M7 949 H13" stroke="#6a6a72" stroke-width="1.200" fill="none"/><path d="M1882 148 L1887 143 V148 Z" fill="#f4f4f4"/><g transform="translate(903 1007)"><path d="M7 0 C8.500 3 9 5.500 9 8 C11 9.500 13 11.500 14 14 H8.500 L7 12 L5.500 14 H0 C1 11.500 3 9.500 5 8 C5 5.500 5.500 3 7 0 Z" fill="#d0d0d2"/></g><g transform="translate(943.5 1011.5)"><path d="M0 0 L3 3 L6 0" stroke="#c0c0c4" stroke-width="1.2" fill="none"/></g><g transform="translate(957.5 1007)"><path d="M7 0 C8.500 3 9 5.500 9 8 C11 9.500 13 11.500 14 14 H8.500 L7 12 L5.500 14 H0 C1 11.500 3 9.500 5 8 C5 5.500 5.500 3 7 0 Z" fill="#d0d0d2"/></g><circle cx="972" cy="1008.500" r="2.300" fill="#f4aa45"/><rect x="971.200" y="1010.500" width="1.600" height="2.500" fill="#f4aa45"/><g transform="translate(984.5 1008)"><path d="M7 0 C8.500 3 9 5.500 9 8 C11 9.500 13 11.500 14 14 H8.500 L7 12 L5.500 14 H0 C1 11.500 3 9.500 5 8 C5 5.500 5.500 3 7 0 Z" fill="#8c8c86"/></g><path d="M995 1006 L998 1003.500 L999 1007" stroke="#8c8c86" stroke-width="1.300" fill="none"/><path d="M1742.16 1014.78 L1741.91 1016.02 L1739.74 1016.59 L1739.21 1017.38 L1739.51 1019.61 L1738.46 1020.32 L1736.52 1019.18 L1735.58 1019.37 L1734.22 1021.16 L1732.98 1020.91 L1732.41 1018.74 L1731.62 1018.21 L1729.39 1018.51 L1728.68 1017.46 L1729.82 1015.52 L1729.63 1014.58 L1727.84 1013.22 L1728.09 1011.98 L1730.26 1011.41 L1730.79 1010.62 L1730.49 1008.39 L1731.54 1007.68 L1733.48 1008.82 L1734.42 1008.63 L1735.78 1006.84 L1737.02 1007.09 L1737.59 1009.26 L1738.38 1009.79 L1740.61 1009.49 L1741.32 1010.54 L1740.18 1012.48 L1740.37 1013.42 Z M1737.600 1014 A2.600 2.600 0 1 0 1732.400 1014 A2.600 2.600 0 1 0 1737.600 1014 Z" fill="#dcdcd8" fill-rule="evenodd"/><rect x="1754" y="1013" width="9.500" height="7" fill="#3f8df0"/><path d="M1761.500 1013 V1010.500 C1761.500 1007.500 1766 1007 1767 1009.500 L1767.500 1011" stroke="#3f8df0" stroke-width="1.500" fill="none"/><path d="M1787 1006.500 C1783.800 1006.500 1782 1009 1782 1011.500 C1782 1013.800 1783.700 1015 1784.400 1017 H1789.600 C1790.300 1015 1792 1013.800 1792 1011.500 C1792 1009 1790.200 1006.500 1787 1006.500 Z" fill="#f4aa45"/><rect x="1785" y="1017.800" width="4" height="1.400" fill="#b07020"/><path d="M1785.500 1019.800 H1788.500 L1787 1021.300 Z" fill="#f4aa45"/><rect x="1804.500" y="1008.500" width="8" height="6.500" fill="#3f8df0"/><circle cx="1816" cy="1015.500" r="3.800" fill="#4a4a50" stroke="#d0d0d2" stroke-width="1.400"/><path d="M1818.800 1018.500 L1822 1021.500" stroke="#d0d0d2" stroke-width="1.600"/><rect x="1832.500" y="1007" width="14" height="14" fill="none" stroke="#9a9aa0" stroke-width="1.200"/><path d="M1840 1010 H1843.500 V1013.500 M1835.500 1014.500 V1018 H1839" stroke="#d0d0d2" stroke-width="1.300" fill="none"/><path d="M1871 124 L1875 120 M1873 122 L1876 125 M1871 129 L1875 125" stroke="#5c5c60" stroke-width="1" fill="none"/></svg>
<svg style="left:0px;top:0px;pointer-events:none" width="1918" height="1028" viewBox="0 0 1918 1028"><rect x="95" y="148" width="1" height="741" fill="#2c3144"/><rect x="668" y="148" width="1" height="741" fill="#2c3144"/><rect x="1240" y="148" width="1" height="741" fill="#2c3144"/><rect x="1812" y="148" width="1" height="741" fill="#2c3144"/><rect x="34" y="180" width="1828" height="1" fill="#312e40"/><rect x="34" y="752" width="1828" height="1" fill="#312e40"/><rect x="601" y="253" width="107" height="1" fill="#2fe4f2"/><rect x="601" y="616" width="107" height="1" fill="#2fe4f2"/><rect x="624" y="253" width="1" height="364" fill="#2fe4f2"/><rect x="459" y="366" width="682" height="1" fill="#2fe4f2"/><rect x="459" y="362" width="1" height="28" fill="#2fe4f2"/><rect x="1140" y="362" width="1" height="28" fill="#2fe4f2"/><rect x="351" y="473" width="823" height="1" fill="#2fe4f2"/><rect x="351" y="450" width="1" height="91" fill="#2fe4f2"/><rect x="1173" y="450" width="1" height="91" fill="#2fe4f2"/><rect x="966" y="338" width="1" height="276" fill="#2fe4f2"/><rect x="965" y="338" width="25" height="1" fill="#2fe4f2"/><rect x="965" y="613" width="25" height="1" fill="#2fe4f2"/><path d="M624.5 253.5 L619 281 L630 281 Z" fill="#00ffff"/><path d="M624.5 616.5 L619 587 L630 587 Z" fill="#00ffff"/><path d="M459 366.5 L489 362 L489 371 Z" fill="#00ffff"/><path d="M1141 366.5 L1112 362 L1112 371 Z" fill="#00ffff"/><path d="M351 473.5 L381 469 L381 478 Z" fill="#00ffff"/><path d="M1174 473.5 L1145 469 L1145 478 Z" fill="#00ffff"/><path d="M966.5 338 L961.5 366 L971.5 366 Z" fill="#00ffff"/><path d="M966.5 614 L961.5 584 L971.5 584 Z" fill="#00ffff"/><g transform="translate(626 309)" fill="none" stroke="#40dc40" stroke-width="1.05" stroke-linejoin="round" stroke-linecap="round"><path transform="translate(0 0)" d="M18 0 L2.5 0 L1 18.5 C3.5 15.5 6.5 14 10 14 C16 14 19.5 19.5 19.5 28 C19.5 36.5 15.5 42 9.75 42 C4.5 42 1 39 0 34"/><path transform="translate(25 0)" d="M19 13.5 C19 21.5 15.5 26 9.75 26 C4 26 0.5 21.5 0.5 13.5 C0.5 5 4 0 9.75 0 C15.5 0 19 5 19 13.5 C19 22 17.5 32 14 37 C12 40.5 9 42 5.5 42 C3.5 42 2 41.5 1 40.5"/><path transform="translate(50 0)" d="M3.2 40 L4.8 40 L4.8 42 L3.2 42 Z"/><path transform="translate(63 0)" d="M18 0 L2.5 0 L1 18.5 C3.5 15.5 6.5 14 10 14 C16 14 19.5 19.5 19.5 28 C19.5 36.5 15.5 42 9.75 42 C4.5 42 1 39 0 34"/></g><g transform="translate(722 415.7)" fill="none" stroke="#40dc40" stroke-width="1.05" stroke-linejoin="round" stroke-linecap="round"><path transform="translate(0 0)" d="M0 0 L19.5 0 L5.5 42"/><path transform="translate(25 0)" d="M4 8.5 L10.5 0 L10.5 42"/><path transform="translate(50 0)" d="M3.2 40 L4.8 40 L4.8 42 L3.2 42 Z"/><path transform="translate(63 0)" d="M9.75 0 C4.5 0 1.5 3.5 1.5 9.5 C1.5 15.5 4.5 19.5 9.75 19.5 C15 19.5 18 15.5 18 9.5 C18 3.5 15 0 9.75 0 Z M9.75 19.5 C3.5 19.5 0 24 0 30.5 C0 37.5 3.5 42 9.75 42 C16 42 19.5 37.5 19.5 30.5 C19.5 24 16 19.5 9.75 19.5 Z"/></g><g transform="translate(566 515.3) rotate(-90)" fill="none" stroke="#40dc40" stroke-width="1.05" stroke-linejoin="round" stroke-linecap="round"><path transform="translate(0 0)" d="M0.5 7.5 C1.5 3 5 0 9.5 0 C15 0 18.5 3.5 18.5 9.5 C18.5 15.5 15 19.5 9 19.5 C15.5 19.5 19.5 23.5 19.5 30.5 C19.5 37.5 15.5 42 9.75 42 C4.5 42 1 39 0 34"/><path transform="translate(25 0)" d="M4 8.5 L10.5 0 L10.5 42"/><path transform="translate(50 0)" d="M3.2 40 L4.8 40 L4.8 42 L3.2 42 Z"/><path transform="translate(63 0)" d="M0 0 L19.5 0 L5.5 42"/></g><g transform="translate(908.3 516.8) rotate(-90)" fill="none" stroke="#40dc40" stroke-width="1.05" stroke-linejoin="round" stroke-linecap="round"><path transform="translate(0 0)" d="M0.5 9 C0.5 3.5 4.5 0 9.75 0 C15 0 19 3.5 19 9 C19 14 16 18.5 10.5 26 L0 42 L19.5 42"/><path transform="translate(25 0)" d="M12.8 42 L12.8 0 L-2 30 L16.2 30"/><path transform="translate(50 0)" d="M3.2 40 L4.8 40 L4.8 42 L3.2 42 Z"/><path transform="translate(63 0)" d="M9.75 0 C3.5 0 0 6 0 21 C0 36 3.5 42 9.75 42 C16 42 19.5 36 19.5 21 C19.5 6 16 0 9.75 0 Z"/></g><rect x="63" y="786" width="1" height="76" fill="#f0f0f0"/><rect x="63" y="861" width="76" height="1" fill="#f0f0f0"/><rect x="57.5" y="855.5" width="12" height="12" fill="none" stroke="#f0f0f0" stroke-width="1"/><path d="M63 759 L71.5 767.3 L80 759 M71.5 767.3 L71.5 777 M148 845 L166 862 M166 845 L148 862" fill="none" stroke="#f0f0f0" stroke-width="1.1"/><g transform="translate(1349 572)"><path d="M5.2 1.2 C5.2 0.2 7.8 0.2 7.8 1.2 L7.8 6.3 C8.2 5.6 10.2 5.8 10.3 6.8 L10.3 7.5 C10.8 6.8 12.8 7 12.9 8 L12.9 8.8 C13.5 8.2 15.5 8.4 15.5 9.6 L15.5 16 C15.5 20.5 13.3 23.8 10.2 23.8 C7.2 23.8 5.8 22.6 4.3 20 L0.8 14.6 C0 13.2 1.6 12 2.8 13 L5.2 15.2 Z" fill="#ffffff" stroke="#0a0a10" stroke-width="1"/></g></svg>
</body></html>
